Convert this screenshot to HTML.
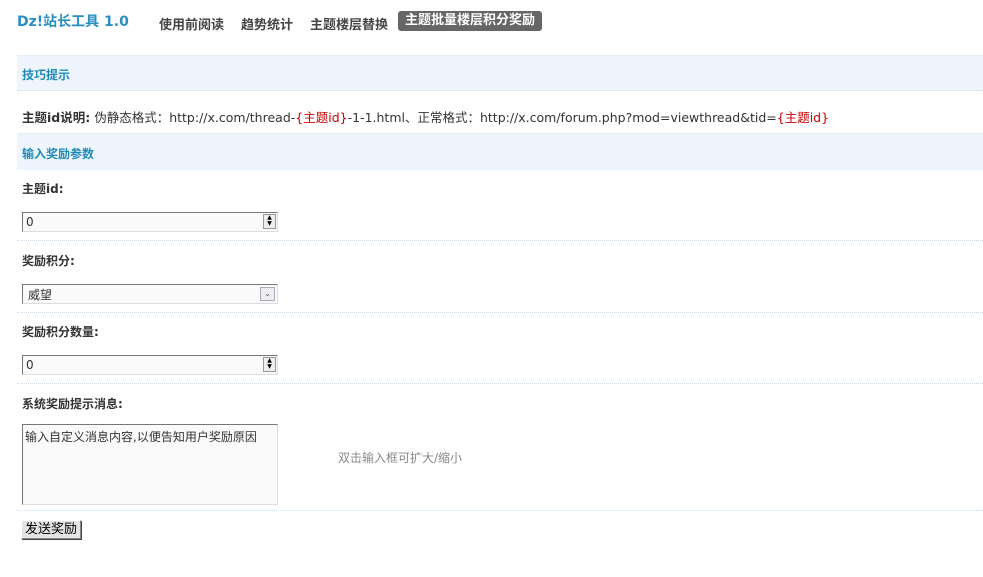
<!DOCTYPE html>
<html><head><meta charset="utf-8"><style>
body{margin:0;width:983px;height:577px;background:#fff;font-family:"DejaVu Sans","Noto Sans CJK SC",sans-serif;font-size:12px;color:#333;position:relative;overflow:hidden}
.a{position:absolute;white-space:nowrap}
.b{font-weight:bold}
.logo{left:17px;top:11px;font-size:14px;font-weight:bold;color:#2a8fc0}
.nav{top:14px;font-size:13px;font-weight:bold;color:#444}
.act{left:398px;top:11px;width:144px;height:20px;background:#666;color:#fff;border-radius:3px;font-size:13px;font-weight:bold;text-align:center;line-height:20px}
.bar{position:absolute;left:17px;width:966px;background:#eef5fc;border-top:1px solid #e4eef7}
.bt{color:#1f8ab8;font-weight:bold;font-size:12px}
.sep{position:absolute;left:17px;width:966px;border-top:1px dotted #cfdbe5;height:0}
.in{position:absolute;left:22px;width:256px;background:#fafafa;border:1px solid #aaa;border-top-color:#777;border-left-color:#777;border-right-color:#ddd;border-bottom-color:#ddd;box-sizing:border-box}
.sp{position:absolute;right:1px;top:1px;width:13px;height:15px;border:1px solid #999;background:#eee;box-sizing:border-box;font-size:6px;line-height:6px;text-align:center;color:#000}
.red{color:#c00}
</style></head><body>
<div class="a logo">Dz!站长工具 1.0</div>
<div class="a nav" style="left:159px">使用前阅读</div>
<div class="a nav" style="left:241px">趋势统计</div>
<div class="a nav" style="left:310px">主题楼层替换</div>
<div class="a act">主题批量楼层积分奖励</div>

<div class="bar" style="top:55px;height:35px"></div>
<div class="a bt" style="left:22px;top:66px">技巧提示</div>
<div class="sep" style="top:90px"></div>
<div class="a" style="left:22px;top:107px;font-size:12.5px"><span class="b">主题id说明:</span> 伪静态格式：http://x.com/thread-<span class="red">{主题id}</span>-1-1.html、正常格式：http://x.com/forum.php?mod=viewthread&amp;tid=<span class="red">{主题id}</span></div>

<div class="bar" style="top:133px;height:36px"></div>
<div class="a bt" style="left:22px;top:145px">输入奖励参数</div>

<div class="a b" style="left:22px;top:180px">主题id:</div>
<div class="in" style="top:212px;height:20px"><span class="a" style="left:3px;top:2px">0</span><div class="sp">▲<br>▼</div></div>
<div class="sep" style="top:240px"></div>

<div class="a b" style="left:22px;top:252px">奖励积分:</div>
<div class="in" style="top:284px;height:20px;background:#fafafa"><span class="a" style="left:5px;top:1px">威望</span><div class="sp" style="right:2px;top:2px;height:14px;width:15px;font-size:8px;line-height:12px;color:#555;border-color:#aab">&#8964;</div></div>
<div class="sep" style="top:312px"></div>

<div class="a b" style="left:22px;top:323px">奖励积分数量:</div>
<div class="in" style="top:355px;height:20px"><span class="a" style="left:3px;top:2px">0</span><div class="sp">▲<br>▼</div></div>
<div class="sep" style="top:383px"></div>

<div class="a b" style="left:22px;top:395px">系统奖励提示消息:</div>
<div class="in" style="top:424px;height:81px"><span class="a" style="left:2px;top:3px">输入自定义消息内容,以便告知用户奖励原因</span></div>
<div class="a" style="left:338px;top:449px;color:#888">双击输入框可扩大/缩小</div>
<div class="sep" style="top:510px"></div>

<div class="a" style="left:21px;top:520px;width:60px;height:19px;box-sizing:border-box;background:#e4e4e4;border:1px solid #888;border-top-color:#fff;border-left-color:#fff;box-shadow:1px 1px 0 #444;text-align:center;line-height:17px;font-size:13px;color:#000">发送奖励</div>
</body></html>
